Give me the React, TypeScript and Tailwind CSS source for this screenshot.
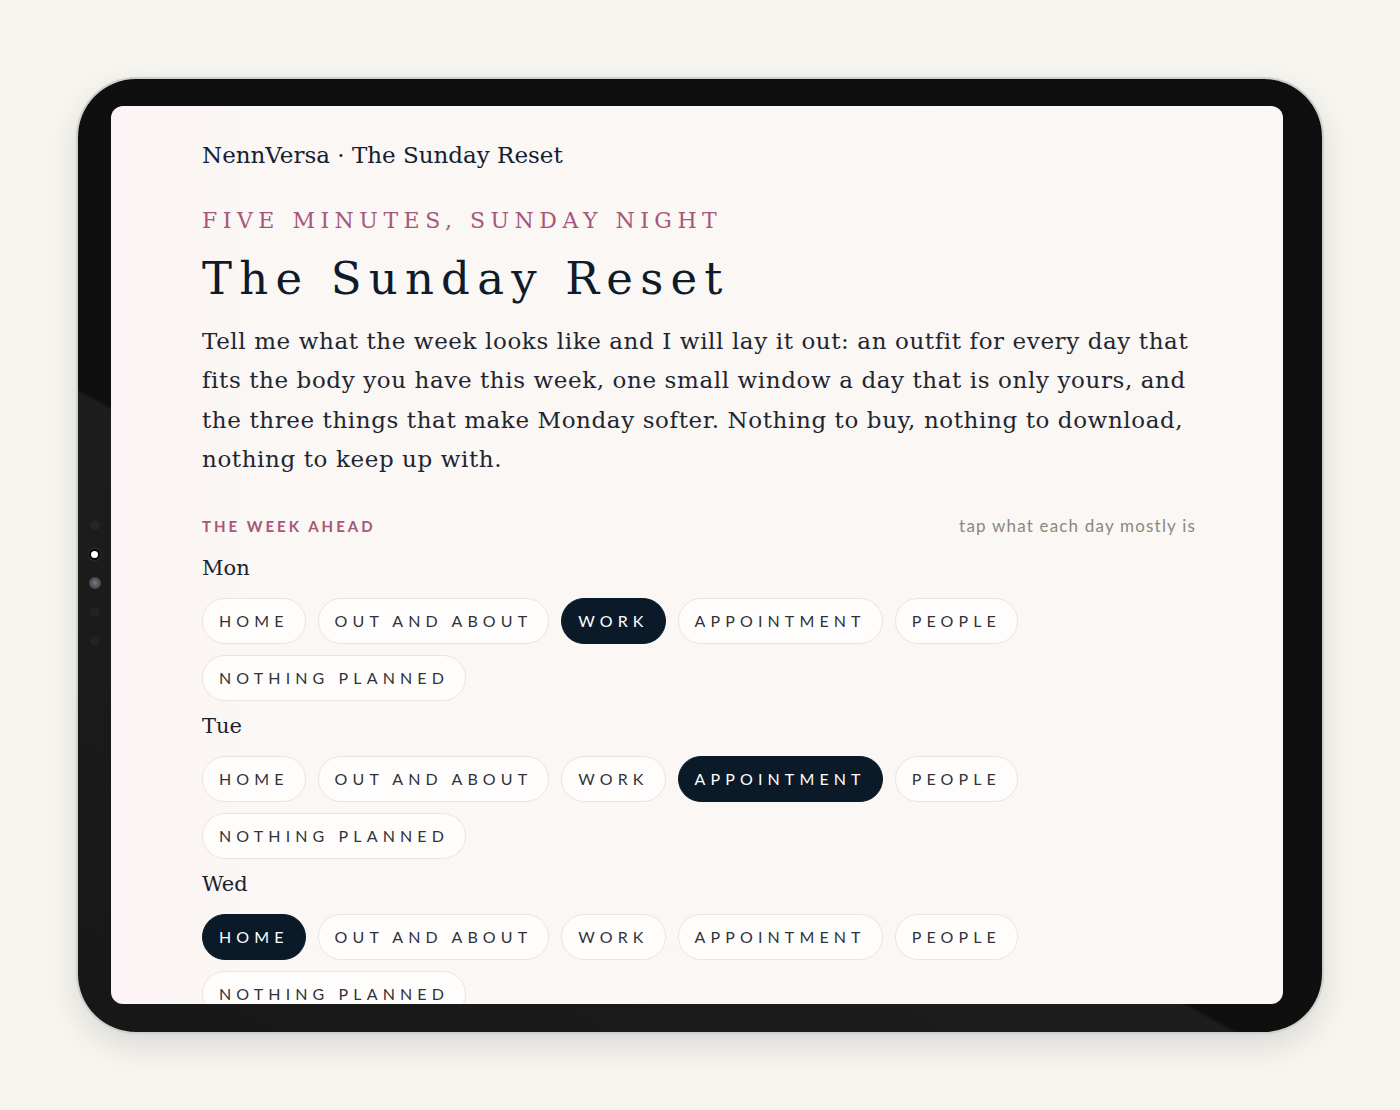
import React from 'react';

const OPTIONS = ['Home', 'Out and about', 'Work', 'Appointment', 'People', 'Nothing planned'];

const week = [
  { day: 'Mon', pick: 'Work' },
  { day: 'Tue', pick: 'Appointment' },
  { day: 'Wed', pick: 'Home' },
  { day: 'Thu', pick: 'Work' },
  { day: 'Fri', pick: 'People' },
  { day: 'Sat', pick: 'Out and about' },
  { day: 'Sun', pick: 'Nothing planned' },
];

const Chip: React.FC<{ label: string; active: boolean }> = ({ label, active }) => (
  <button
    className={`h-[46px] px-4 rounded-full border text-[16px] uppercase tracking-[0.32em] font-['Lato',sans-serif] ${
      active
        ? 'bg-[#0b1a29] border-[#0b1a29] text-white'
        : 'bg-[#fffdfc] border-[#ebe3e0] text-[#2f333a]'
    }`}
  >
    {label}
  </button>
);

const BezelDots = () => (
  <div className="w-[33px] flex flex-col items-center pt-[405px]">
    <div className="h-[29px] flex items-center">
      <span className="w-[10px] h-[10px] rounded-full bg-[#262626]" />
    </div>
    <div className="h-[29px] flex items-center">
      <span className="w-[7px] h-[7px] rounded-full bg-white shadow-[0_0_0_2px_#050505,0_0_4px_rgba(255,255,255,0.6)]" />
    </div>
    <div className="h-[29px] flex items-center">
      <span className="w-[12px] h-[12px] rounded-full bg-[radial-gradient(circle,#7a7a84_0%,#4b4b52_60%,#3a3a40_100%)]" />
    </div>
    <div className="h-[29px] flex items-center">
      <span className="w-[10px] h-[10px] rounded-full bg-[#222222]" />
    </div>
    <div className="h-[29px] flex items-center">
      <span className="w-[10px] h-[10px] rounded-full bg-[#222222]" />
    </div>
  </div>
);

export default function App() {
  return (
    <div className="h-[1110px] w-full bg-[#f7f5f0] flex items-center justify-center">
      <div className="w-[1244px] h-[953px] rounded-[58px] flex pt-[27px] pb-[28px] pr-[39px] bg-[linear-gradient(209deg,#0e0e0e_0%,#0f0f0f_60.8%,#1d1d1d_61.1%,#171717_100%)] shadow-[0_0_0_2px_#cfcfcd,0_12px_34px_rgba(0,0,0,0.13)]">
        <BezelDots />
        <div className="flex-1 rounded-[12px] overflow-hidden bg-[linear-gradient(90deg,#fdf3f6_0%,#fcf5f5_5%,#faf7f4_12%,#faf7f4_100%)] pl-[91px] pr-[87px] pt-[33px] text-[#142030]">
          <div className="font-['DejaVu_Serif',serif] text-[23px] leading-[32px]">NennVersa · The Sunday Reset</div>

          <div className="mt-[35px] font-['DejaVu_Serif',serif] text-[22px] leading-[30px] tracking-[0.25em] text-[#a8567b]">
            FIVE MINUTES, SUNDAY NIGHT
          </div>
          <h1 className="mt-[15px] font-['DejaVu_Serif',serif] text-[45px] leading-[55px] tracking-[0.16em] text-[#0f1b2a]">
            The Sunday Reset
          </h1>
          <p className="mt-[16px] font-['DejaVu_Serif',serif] text-[23px] leading-[39.5px] tracking-[0.6px] text-[#1f2530]">
            Tell me what the week looks like and I will lay it out: an outfit for every day that fits the body you have
            this week, one small window a day that is only yours, and the three things that make Monday softer. Nothing
            to buy, nothing to download, nothing to keep up with.
          </p>

          <div className="mt-[36px] flex items-center justify-between font-['Lato',sans-serif] leading-[20px]">
            <span className="text-[15px] font-bold tracking-[0.2em] text-[#a8567b]">THE WEEK AHEAD</span>
            <span className="text-[17px] tracking-[0.07em] text-[#8a8784]">tap what each day mostly is</span>
          </div>

          <div className="mt-[17px] flex flex-col gap-[10px]">
            {week.map((d) => (
              <div key={d.day}>
                <div className="font-['DejaVu_Serif',serif] text-[21px] leading-[30px] text-[#1a2230]">{d.day}</div>
                <div className="mt-[15px] flex flex-wrap gap-x-3 gap-y-[11px]">
                  {OPTIONS.map((o) => (
                    <Chip key={o} label={o} active={o === d.pick} />
                  ))}
                </div>
              </div>
            ))}
          </div>
        </div>
      </div>
    </div>
  );
}
